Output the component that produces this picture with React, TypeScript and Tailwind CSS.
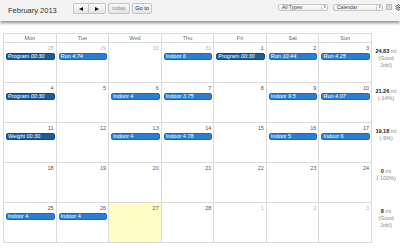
import { Settings } from "lucide-react";

type Ev = { label: string; num: string; dark?: boolean; it?: boolean };
type Day = { n: number; other?: boolean; today?: boolean; ev?: Ev };

const weeks: { days: Day[]; total: string; note: string[] }[] = [
    {
        days: [
            { n: 28, other: true, ev: { label: "Program", num: "00:30", dark: true, it: true } },
            { n: 29, other: true, ev: { label: "Run", num: "4.74", it: true } },
            { n: 30, other: true },
            { n: 31, other: true, ev: { label: "Indoor", num: "6", it: true } },
            { n: 1, ev: { label: "Program", num: "00:30", dark: true, it: true } },
            { n: 2, ev: { label: "Run", num: "10.44", it: true } },
            { n: 3, ev: { label: "Run", num: "4.25", it: true } },
        ],
        total: "24.83",
        note: ["(Good", "Job!)"],
    },
    {
        days: [
            { n: 4, ev: { label: "Program", num: "00:30", dark: true, it: true } },
            { n: 5 },
            { n: 6, ev: { label: "Indoor", num: "4", it: true } },
            { n: 7, ev: { label: "Indoor", num: "3.75", it: true } },
            { n: 8 },
            { n: 9, ev: { label: "Indoor", num: "9.5", it: true } },
            { n: 10, ev: { label: "Run", num: "4.07", it: true } },
        ],
        total: "21.26",
        note: ["(-14%)"],
    },
    {
        days: [
            { n: 11, ev: { label: "Weight", num: "00:30", dark: true } },
            { n: 12 },
            { n: 13, ev: { label: "Indoor", num: "4" } },
            { n: 14, ev: { label: "Indoor", num: "4.78" } },
            { n: 15 },
            { n: 16, ev: { label: "Indoor", num: "5" } },
            { n: 17, ev: { label: "Indoor", num: "6" } },
        ],
        total: "19.18",
        note: ["(-9%)"],
    },
    {
        days: [{ n: 18 }, { n: 19 }, { n: 20 }, { n: 21 }, { n: 22 }, { n: 23 }, { n: 24 }],
        total: "0",
        note: ["(-100%)"],
    },
    {
        days: [
            { n: 25, ev: { label: "Indoor", num: "4" } },
            { n: 26, ev: { label: "Indoor", num: "4" } },
            { n: 27, today: true },
            { n: 28 },
            { n: 1, other: true },
            { n: 2, other: true },
            { n: 3, other: true },
        ],
        total: "8",
        note: ["(Good", "Job!)"],
    },
];

const dayNames = ["Mon", "Tue", "Wed", "Thu", "Fri", "Sat", "Sun"];

function Btn({ children, w, dim }: { children: React.ReactNode; w: string; dim?: boolean }) {
    return (
        <div
            className={`${w} h-[11px] flex items-center justify-center border border-[#c4c4c4] rounded-[2px] bg-gradient-to-b from-[#fafafa] to-[#e4e4e4] text-[5.5px] ${dim ? "text-[#8a8a8a]" : "text-[#222]"}`}
        >
            {children}
        </div>
    );
}

function Select({ label, w }: { label: string; w: string }) {
    return (
        <div className={`${w} h-[7px] flex items-center border border-[#c8c8c8] rounded-[2px] bg-gradient-to-b from-[#ffffff] to-[#ececec] text-[5px] text-[#444]`}>
            <span className="flex-1 pl-[3px] leading-none">{label}</span>
            <span className="w-[6px] h-full border-l border-[#d0d0d0] flex items-center justify-center text-[4px] leading-none text-[#555]">
                ⇕
            </span>
        </div>
    );
}

function App() {
    return (
        <div className="w-[400px] h-[248px] bg-white overflow-hidden" style={{ fontFamily: '"Liberation Sans", Arial, sans-serif' }}>
            <div className="relative h-[21px] bg-[#f3f3f3] flex items-center shadow-[0_2px_3px_rgba(0,0,0,0.45)] z-10">
                <div className="pl-[8px] text-[7.5px] text-[#333] w-[73px]">February 2013</div>
                <div className="flex -mt-[4px]">
                    <Btn w="w-[16px] rounded-r-none">
                        <svg width="4" height="4" viewBox="0 0 4 4"><path d="M0 2 L4 0 L4 4 Z" fill="#111" /></svg>
                    </Btn>
                    <Btn w="w-[17px] rounded-l-none border-l-0">
                        <svg width="4" height="4" viewBox="0 0 4 4"><path d="M4 2 L0 0 L0 4 Z" fill="#111" /></svg>
                    </Btn>
                    <div className="w-[2px]" />
                    <Btn w="w-[22px]" dim>today</Btn>
                    <div className="w-[2px]" />
                    <Btn w="w-[20px]">Go to</Btn>
                </div>
                <div className="flex-1" />
                <div className="flex items-center gap-[5px] -mt-[7px]">
                    <Select label="All Types" w="w-[50px]" />
                    <Select label="Calendar" w="w-[50px]" />
                </div>
                <div className="ml-[3px] -mt-[7px] w-[6px] h-[6px] bg-[#d6d6d6] border border-[#bbb]" />
                <Settings size={7} strokeWidth={2.5} className="ml-[3px] -mr-[2px] -mt-[7px] text-[#444] shrink-0" />
            </div>

            <div className="flex mt-[12px] ml-[3px]">
                <div className="w-[369px] border-l border-t border-[#dcdcdc]">
                    <div className="grid grid-cols-7 h-[9px]">
                        {dayNames.map((d) => (
                            <div key={d} className="border-r border-b border-[#dcdcdc] text-center text-[5.5px] leading-[8px] text-[#666]">
                                {d}
                            </div>
                        ))}
                    </div>
                    {weeks.map((w, wi) => (
                        <div key={wi} className="grid grid-cols-7 h-[40px]">
                            {w.days.map((d, di) => (
                                <div
                                    key={di}
                                    className={`border-r border-b border-[#dcdcdc] ${d.today ? "bg-[#fffcc6]" : ""}`}
                                >
                                    <div className={`h-[10px] text-right pr-[2px] text-[5.5px] leading-[8px] pt-[1px] ${d.other ? "text-[#b8b8b8]" : "text-[#555]"}`}>
                                        {d.n}
                                    </div>
                                    {d.ev && (
                                        <div
                                            className={`ml-[2px] mr-[1px] h-[7px] rounded-[2px] border px-[1px] text-[5.5px] leading-[5px] text-white whitespace-nowrap overflow-hidden ${d.ev.dark ? "bg-[#1b5c9c] border-[#134a82]" : "bg-[#2a7fd2] border-[#1d6bb7]"}`}
                                        >
                                            {d.ev.label} {d.ev.it ? <i>{d.ev.num}</i> : d.ev.num}
                                        </div>
                                    )}
                                </div>
                            ))}
                        </div>
                    ))}
                </div>
                <div className="w-[28px] pt-[9px]">
                    {weeks.map((w, wi) => (
                        <div key={wi} className="h-[40px] pt-[6px] text-center text-[5.5px] leading-[7px] text-[#888]">
                            <div>
                                <span className="font-bold text-[#222]">{w.total}</span> mi
                            </div>
                            {w.note.map((l) => (
                                <div key={l}>{l}</div>
                            ))}
                        </div>
                    ))}
                </div>
            </div>
        </div>
    );
}

export default App;
